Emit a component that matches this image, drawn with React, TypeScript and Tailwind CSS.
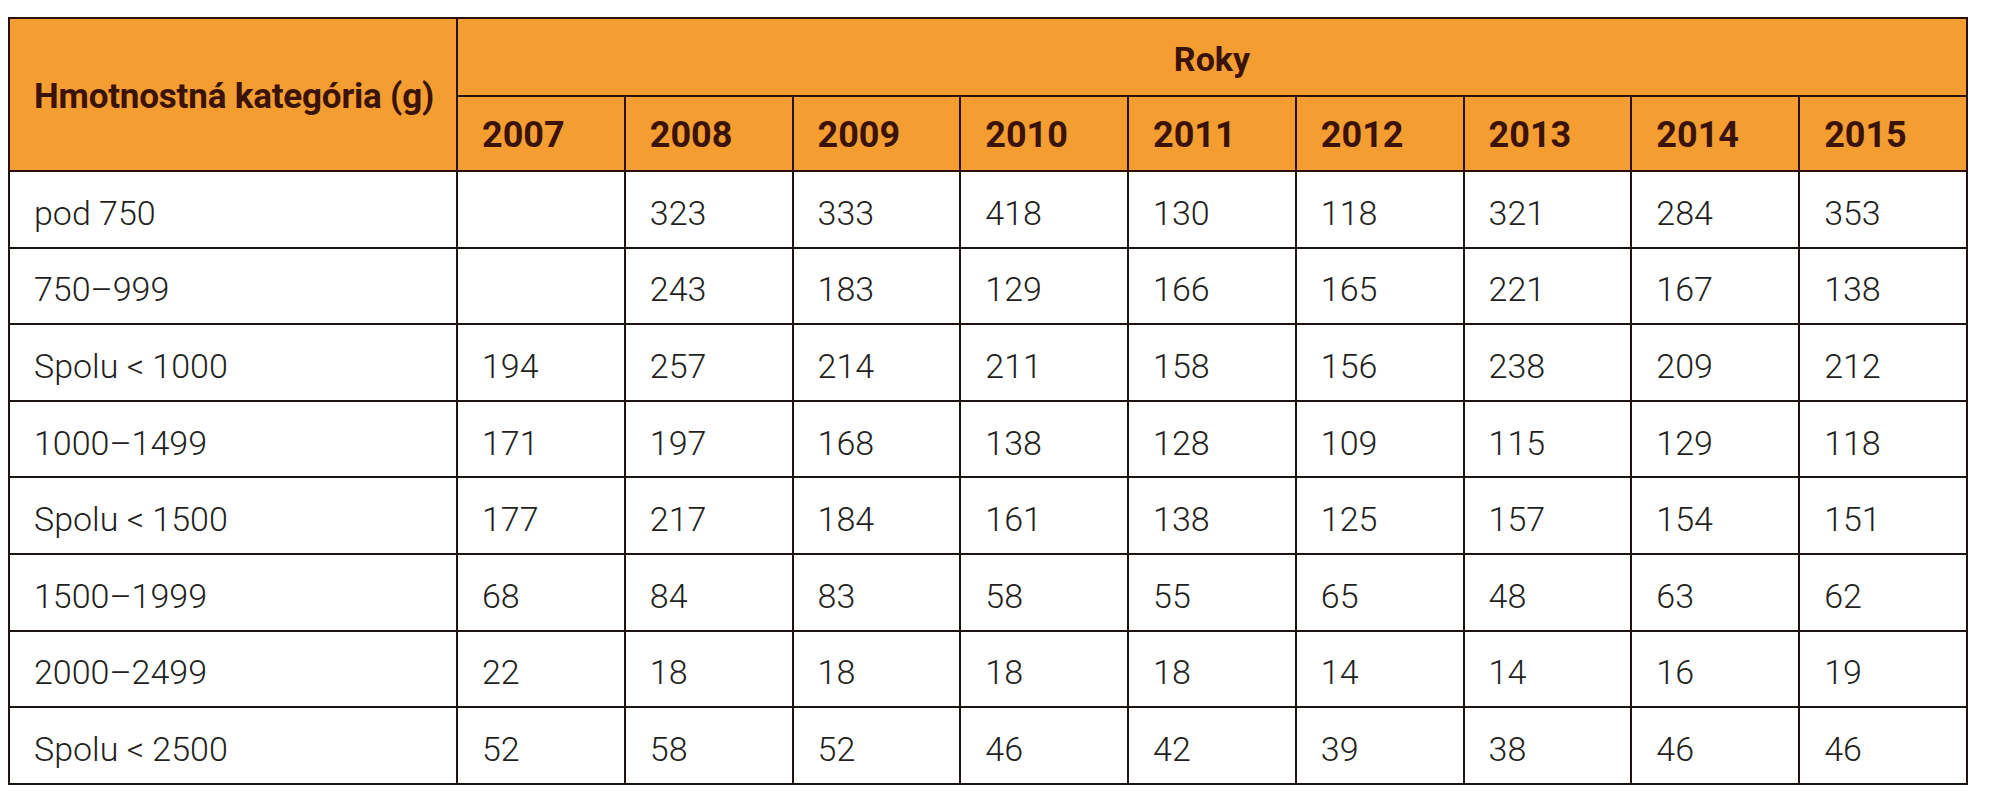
import React from 'react';

const years = ['2007', '2008', '2009', '2010', '2011', '2012', '2013', '2014', '2015'];

const rows: { label: string; values: string[] }[] = [
  { label: 'pod 750', values: ['', '323', '333', '418', '130', '118', '321', '284', '353'] },
  { label: '750–999', values: ['', '243', '183', '129', '166', '165', '221', '167', '138'] },
  { label: 'Spolu < 1000', values: ['194', '257', '214', '211', '158', '156', '238', '209', '212'] },
  { label: '1000–1499', values: ['171', '197', '168', '138', '128', '109', '115', '129', '118'] },
  { label: 'Spolu < 1500', values: ['177', '217', '184', '161', '138', '125', '157', '154', '151'] },
  { label: '1500–1999', values: ['68', '84', '83', '58', '55', '65', '48', '63', '62'] },
  { label: '2000–2499', values: ['22', '18', '18', '18', '18', '14', '14', '16', '19'] },
  { label: 'Spolu < 2500', values: ['52', '58', '52', '46', '42', '39', '38', '46', '46'] },
];

export default function App() {
  return (
    <div className="min-h-[800px] bg-white pl-[8px] pt-[17px] font-['Roboto','Liberation_Sans',sans-serif]">
      <table className="w-[1960px] table-fixed border-collapse border-2 border-[#1c1410]">
        <colgroup>
          <col className="w-[448px]" />
          {years.map((y) => (
            <col key={y} />
          ))}
        </colgroup>
        <thead className="bg-[#f49d31] text-[#3a1206]">
          {/* Header */}
          <tr className="h-[78px]">
            <th
              rowSpan={2}
              className="border-2 border-[#2a0f06] pl-[24px] pt-[6px] text-left align-middle text-[35px] font-bold tracking-[-0.2px]"
            >
              Hmotnostná kategória (g)
            </th>
            <th colSpan={9} className="border-2 border-[#2a0f06] pt-[4px] text-center align-middle text-[34px] font-bold">
              Roky
            </th>
          </tr>
          <tr className="h-[75px]">
            {years.map((y) => (
              <th key={y} className="border-2 border-[#2a0f06] pl-[24px] pt-[2px] text-left align-middle text-[36px] font-bold">
                {y}
              </th>
            ))}
          </tr>
        </thead>
        <tbody className="text-[#231f20]">
          {rows.map((r) => (
            <tr key={r.label} className="h-[76.6px]">
              <td className="border-2 border-[#1c1410] pl-[24px] pt-[8px] align-middle text-[34px] font-light">
                {r.label}
              </td>
              {r.values.map((v, i) => (
                <td key={i} className="border-2 border-[#1c1410] pl-[24px] pt-[8px] align-middle text-[34px] font-light">
                  {v}
                </td>
              ))}
            </tr>
          ))}
        </tbody>
      </table>
    </div>
  );
}
